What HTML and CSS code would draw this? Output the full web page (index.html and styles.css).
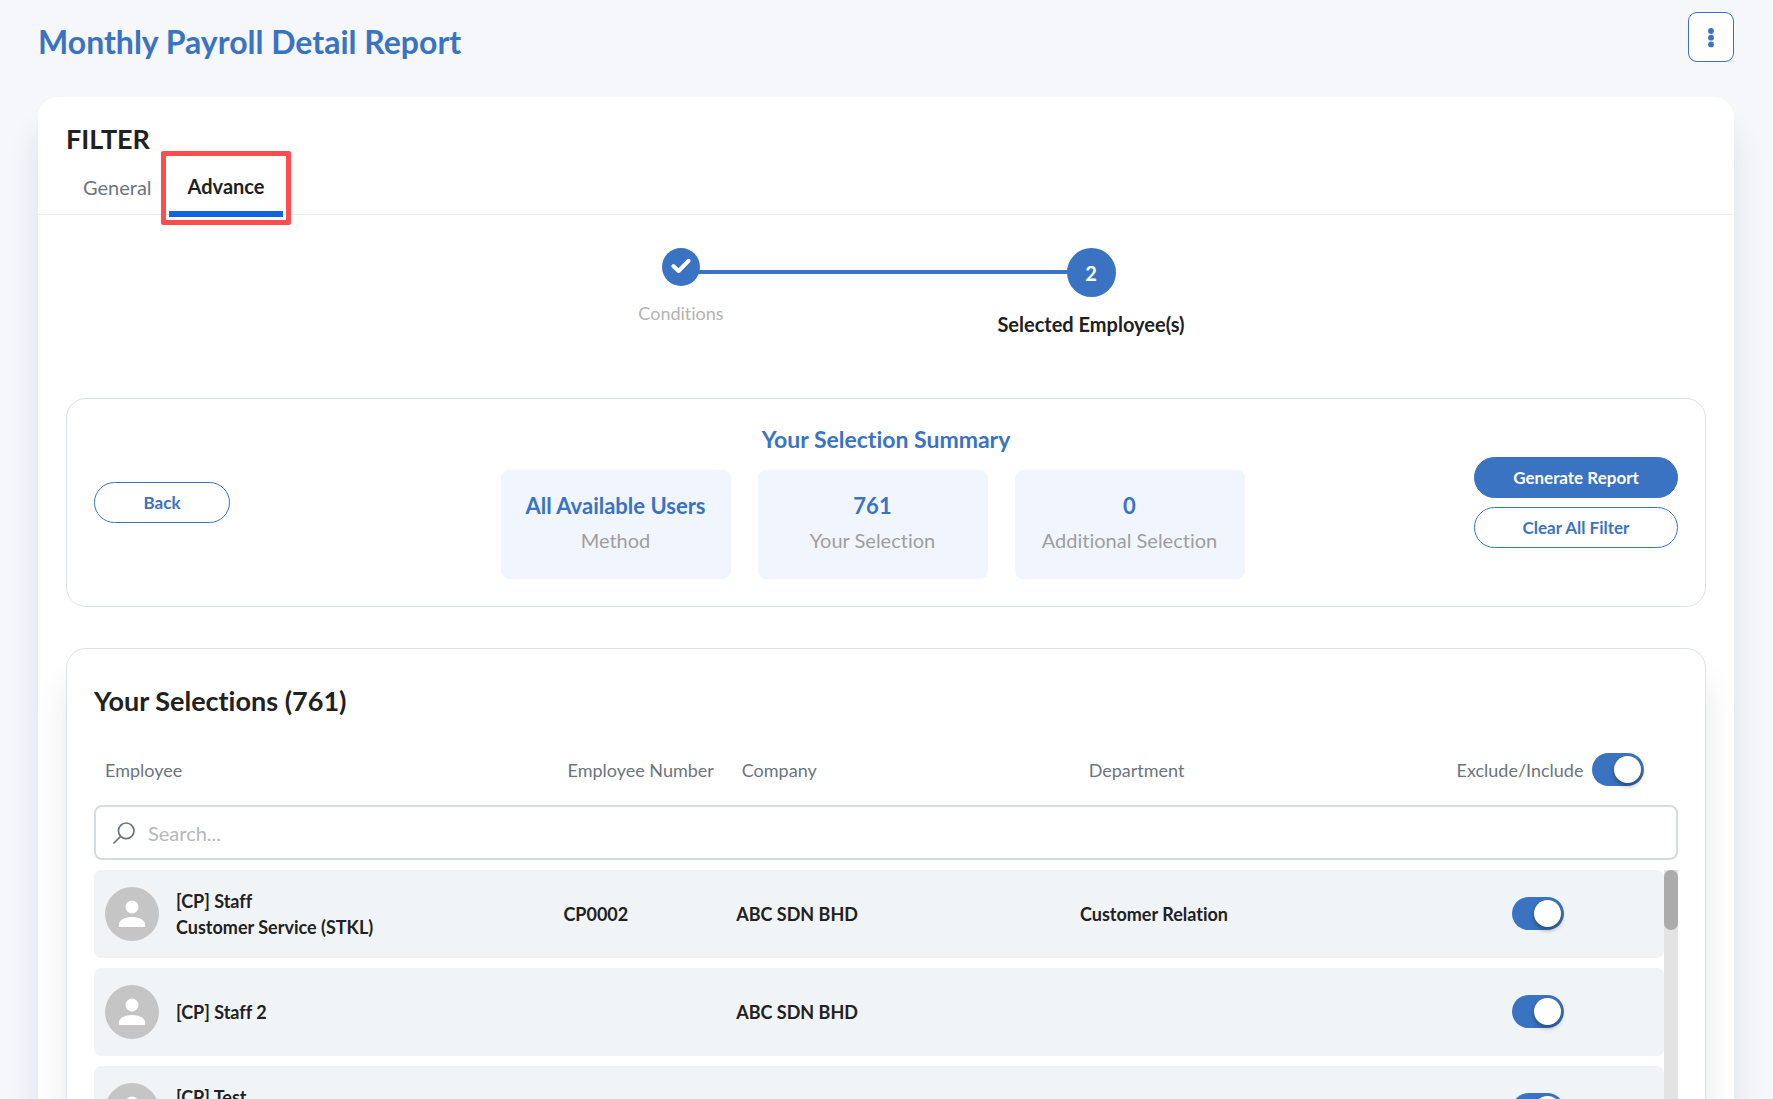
FILE: index.html
```html
<!DOCTYPE html>
<html lang="en">
<head>
  <meta charset="utf-8">
  <meta name="viewport" content="width=device-width, initial-scale=1">
  <title>Monthly Payroll Detail Report</title>
  <link rel="stylesheet" href="styles.css">
</head>
<body>
  <header class="page-header">
    <h1>Monthly Payroll Detail Report</h1>
    <button class="menu-button" type="button" aria-label="More options">
      <svg width="8" height="22" viewBox="0 0 8 22" fill="currentColor">
        <circle cx="4" cy="5" r="2.9"/>
        <circle cx="4" cy="11.7" r="2.9"/>
        <circle cx="4" cy="18.4" r="2.9"/>
      </svg>
    </button>
  </header>

  <main class="card">
    <h2 class="filter-title">FILTER</h2>
    <nav class="tabs">
      <button class="tab" type="button">General</button>
      <button class="tab active" type="button">Advance</button>
    </nav>

    <ol class="stepper">
      <li class="step done">
        <span class="step-icon">
          <svg width="20" height="18" viewBox="0 0 20 18" fill="none" stroke="#fff" stroke-width="4" stroke-linecap="round" stroke-linejoin="round">
            <path d="M2.5 8.2 7.6 13 17.5 2.8"/>
          </svg>
        </span>
        <span class="step-label">Conditions</span>
      </li>
      <li class="step current">
        <span class="step-icon">2</span>
        <span class="step-label">Selected Employee(s)</span>
      </li>
    </ol>

    <section class="panel summary">
      <div class="summary-left">
        <button class="pill back" type="button">Back</button>
      </div>
      <div class="summary-center">
        <h3>Your Selection Summary</h3>
        <div class="tiles">
          <div class="tile">
            <div class="tile-value">All Available Users</div>
            <div class="tile-label">Method</div>
          </div>
          <div class="tile">
            <div class="tile-value">761</div>
            <div class="tile-label">Your Selection</div>
          </div>
          <div class="tile">
            <div class="tile-value">0</div>
            <div class="tile-label">Additional Selection</div>
          </div>
        </div>
      </div>
      <div class="summary-right">
        <button class="pill primary" type="button">Generate Report</button>
        <button class="pill" type="button">Clear All Filter</button>
      </div>
    </section>

    <section class="panel selections">
      <h2>Your Selections (761)</h2>
      <table class="head-table">
        <colgroup><col class="col-employee"><col class="col-number"><col class="col-company"><col class="col-department"><col></colgroup>
        <thead>
          <tr>
            <th>Employee</th>
            <th>Employee Number</th>
            <th>Company</th>
            <th>Department</th>
            <th class="toggle-cell">
              <label class="toggle-all">Exclude/Include <input class="toggle" type="checkbox" checked></label>
            </th>
          </tr>
        </thead>
      </table>

      <div class="search">
        <svg width="22" height="22" viewBox="0 0 22 22" fill="none" stroke="#6c757d" stroke-width="1.7" stroke-linecap="round">
          <circle cx="13.2" cy="8.8" r="7.8"/>
          <path d="M7.6 14.4 1 21"/>
        </svg>
        <input type="text" placeholder="Search..." aria-label="Search">
      </div>

      <div class="list">
        <table class="list-table" aria-label="Selected employees">
          <colgroup><col class="col-employee"><col class="col-number"><col class="col-company"><col class="col-department"><col></colgroup>
          <tbody>
            <tr>
              <td>
                <div class="employee">
                  <span class="avatar"><svg width="26" height="28" viewBox="0 0 26 28" fill="#fff"><circle cx="13" cy="7" r="6.5"/><path d="M0 27v-2.5C0 19.5 6.5 17 13 17s13 2.5 13 7.5V27z"/></svg></span>
                  <span>[CP] Staff<br>Customer Service (STKL)</span>
                </div>
              </td>
              <td>CP0002</td>
              <td>ABC SDN BHD</td>
              <td>Customer Relation</td>
              <td class="toggle-cell"><input class="toggle" type="checkbox" checked aria-label="Include [CP] Staff"></td>
            </tr>
            <tr>
              <td>
                <div class="employee">
                  <span class="avatar"><svg width="26" height="28" viewBox="0 0 26 28" fill="#fff"><circle cx="13" cy="7" r="6.5"/><path d="M0 27v-2.5C0 19.5 6.5 17 13 17s13 2.5 13 7.5V27z"/></svg></span>
                  <span>[CP] Staff 2</span>
                </div>
              </td>
              <td></td>
              <td>ABC SDN BHD</td>
              <td></td>
              <td class="toggle-cell"><input class="toggle" type="checkbox" checked aria-label="Include [CP] Staff 2"></td>
            </tr>
            <tr>
              <td>
                <div class="employee">
                  <span class="avatar"><svg width="26" height="28" viewBox="0 0 26 28" fill="#fff"><circle cx="13" cy="7" r="6.5"/><path d="M0 27v-2.5C0 19.5 6.5 17 13 17s13 2.5 13 7.5V27z"/></svg></span>
                  <span>[CP] Test<br>&nbsp;</span>
                </div>
              </td>
              <td></td>
              <td></td>
              <td></td>
              <td class="toggle-cell"><input class="toggle" type="checkbox" checked aria-label="Include [CP] Test"></td>
            </tr>
          </tbody>
        </table>
        <div class="scrollbar"><div class="scroll-thumb"></div></div>
      </div>
    </section>
  </main>
</body>
</html>
```
FILE: styles.css
```css
* {
  box-sizing: border-box;
}
body {
  margin: 0;
  padding: 0 39px 40px 38px;
  background: #f5f7fb;
  color: #212121;
  font-family: Lato, "Open Sans", sans-serif;
  font-size: 18px;
  font-variant-ligatures: none;
}
h1, h2, h3 {
  margin: 0;
  font-weight: 700;
}
button, input {
  font-family: inherit;
}
button {
  cursor: pointer;
}

.page-header {
  display: flex;
  justify-content: space-between;
  align-items: flex-start;
  padding-top: 12px;
  height: 97px;
}
h1 {
  color: #3a73c2;
  font-size: 32px;
  line-height: 60px;
}
.menu-button {
  display: flex;
  align-items: center;
  justify-content: center;
  width: 46px;
  height: 50px;
  padding: 0;
  border: 1px solid #3a73c2;
  border-radius: 9px;
  background: #fff;
  color: #3a73c2;
}

.card {
  padding-bottom: 28px;
  border-radius: 20px;
  background: #fff;
  box-shadow: 0 32px 32px rgba(20, 30, 40, .1);
}
.filter-title {
  padding: 25px 28px 0;
  font-size: 27px;
  line-height: 34px;
}

/* tabs */
.tabs {
  display: flex;
  padding: 0 28px;
  border-bottom: 1px solid #eceeef;
}
.tab {
  height: 54px;
  padding: 7px 17px 0;
  border: 0;
  background: none;
  color: #6c757d;
  font-size: 20px;
}
.tab.active {
  position: relative;
  height: 61px;
  margin-bottom: -3px;
  padding: 7px 19px 2px;
  border-bottom: 6px solid #1463de;
  color: #212121;
  font-weight: 700;
}
.tab.active::after {
  content: "";
  position: absolute;
  inset: -5px -8px -14px -8px;
  border: 5px solid #ff4d4f;
  border-radius: 2px;
}

/* stepper */
.stepper {
  display: flex;
  justify-content: center;
  height: 183px;
  margin: 0;
  padding: 33px 0 0;
  list-style: none;
}
.step {
  position: relative;
  display: flex;
  flex: 0 1 410px;
  flex-direction: column;
  align-items: center;
}
.step.done::before {
  content: "";
  position: absolute;
  top: 22px;
  left: 50%;
  width: 100%;
  height: 4px;
  background: #3a73c2;
}
.step-icon {
  position: relative;
  display: flex;
  align-items: center;
  justify-content: center;
  width: 38px;
  height: 38px;
  border-radius: 50%;
  background: #3a73c2;
  color: #fff;
}
.step.current .step-icon {
  width: 49px;
  height: 49px;
  font-size: 20px;
  font-weight: 700;
}
.step-label {
  margin-top: 15px;
  color: #b3b3b3;
  line-height: 24px;
}
.step.current .step-label {
  color: #212121;
  font-size: 20px;
  font-weight: 700;
}

.panel {
  margin: 0 28px;
  border: 1px solid #dde1e8;
  border-radius: 20px;
  background: #fff;
}

/* selection summary */
.summary {
  display: grid;
  grid-template-columns: 1fr auto 1fr;
  align-items: center;
  padding: 27px;
}
.summary h3 {
  margin-bottom: 18px;
  color: #3a73c2;
  font-size: 23px;
  line-height: 26px;
  text-align: center;
}
.tiles {
  display: flex;
}
.tile {
  width: 230px;
  height: 109px;
  margin-right: 27px;
  padding-top: 22px;
  border-radius: 8px;
  background: #f1f6fe;
  text-align: center;
}
.tile-value {
  color: #3a73c2;
  font-size: 22px;
  font-weight: 700;
  line-height: 28px;
}
.tile-label {
  margin-top: 8px;
  color: #9e9e9e;
  font-size: 20px;
  line-height: 24px;
}
.summary-right {
  display: flex;
  flex-direction: column;
  align-items: flex-end;
  gap: 9px;
}
.pill {
  width: 204px;
  height: 41px;
  border: 1px solid #3a73c2;
  border-radius: 21px;
  background: #fff;
  color: #3a73c2;
  font-size: 17px;
  font-weight: 700;
}
.pill.back {
  width: 136px;
}
.pill.primary {
  background: #3a73c2;
  color: #fff;
}

/* selected employees */
.selections {
  margin-top: 41px;
  padding: 35px 27px 28px;
  box-shadow: 0 32px 32px rgba(20, 30, 40, .1);
}
.selections h2 {
  font-size: 27px;
  line-height: 34px;
}
table {
  width: 100%;
  table-layout: fixed;
  border-spacing: 0;
}
th, td {
  padding: 0 11px;
  text-align: left;
}
.col-employee { width: 29.2%; }
.col-number { width: 11%; }
.col-company { width: 21.9%; }
.col-department { width: 21.8%; }

.head-table {
  margin-top: 18px;
}
.head-table th {
  height: 68px;
  color: #6c757d;
  font-weight: 400;
  white-space: nowrap;
}
.toggle-cell,
.head-table .toggle-cell {
  text-align: center;
}
.toggle-all {
  display: flex;
  align-items: center;
  justify-content: center;
  gap: 9px;
}
.toggle {
  appearance: none;
  width: 52px;
  height: 33px;
  margin: 0 0 2px;
  padding: 3px;
  border-radius: 17px;
  background: #3a73c2;
  vertical-align: middle;
  cursor: pointer;
}
.toggle::before {
  content: "";
  display: block;
  width: 27px;
  height: 27px;
  border-radius: 50%;
  background: #fff;
  box-shadow: 0 3px 5px rgba(0, 0, 0, .35);
}
.toggle:checked::before {
  margin-left: auto;
}

.search {
  display: flex;
  align-items: center;
  gap: 13px;
  height: 55px;
  margin-top: 1px;
  padding: 0 17px;
  border: 2px solid #d6dce0;
  border-radius: 8px;
}
.search input {
  flex: 1;
  padding: 0;
  border: 0;
  outline: 0;
  font-size: 20px;
}
.search input::placeholder {
  color: #b5b8ba;
}

.list {
  display: flex;
}
.list-table {
  flex: 1;
  border-spacing: 0 10px;
}
.list-table td {
  height: 88px;
  background: #f0f4f7;
  font-weight: 700;
}
.list-table td:first-child {
  border-radius: 7px 0 0 7px;
}
.list-table td:last-child {
  border-radius: 0 7px 7px 0;
}
.employee {
  display: flex;
  align-items: center;
  gap: 17px;
  line-height: 26px;
}
.avatar {
  display: flex;
  align-items: center;
  justify-content: center;
  width: 54px;
  height: 54px;
  border-radius: 50%;
  background: #c5c5c5;
}
.scrollbar {
  width: 14px;
  margin-top: 10px;
  background: #e3e3e3;
}
.scroll-thumb {
  height: 60px;
  border-radius: 7px;
  background: #ababab;
}
```
